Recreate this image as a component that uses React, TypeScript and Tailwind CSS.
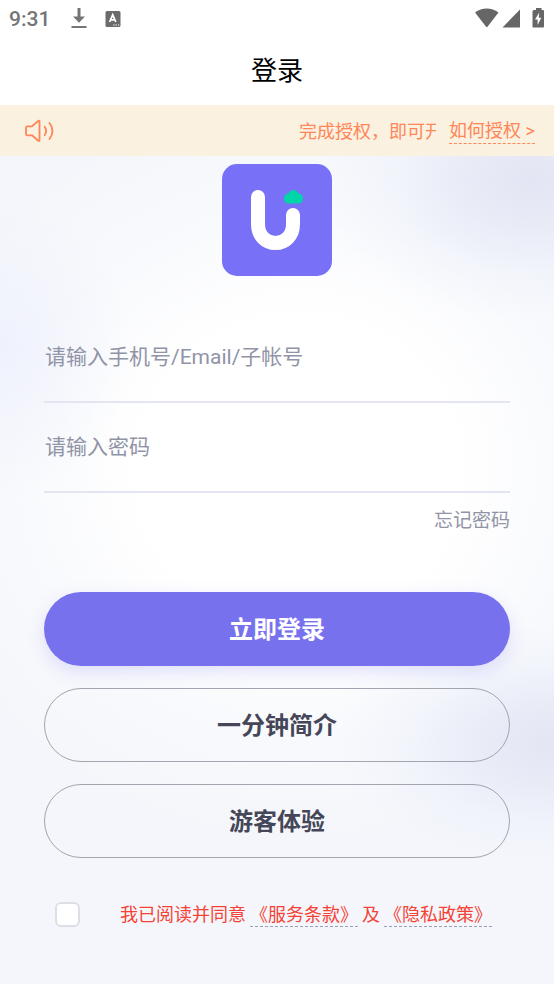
import React, { useState } from 'react';

const StatusBar: React.FC = () => (
  <div className="flex h-9 items-center justify-between pl-[9px] pr-[9px] text-[#666666]">
    <div className="flex items-center pt-px">
      <span className="text-[21px] leading-6 font-medium text-[#757575]">9:31</span>
      <svg className="ml-[21px] h-[22px] w-4" viewBox="0 0 16 22" fill="none" stroke="#757575" strokeWidth="2">
        <path d="M8 0v12" strokeWidth="3" />
        <path d="M2 8.500h12L8 14.800z" fill="#757575" stroke="none" />
        <path d="M0.500 19h15" />
      </svg>
      <svg className="ml-[18px] h-4 w-4" viewBox="0 0 16 16">
        <rect x="0.500" y="0" width="15" height="16" rx="1.600" fill="#6b6b6b" />
        <path d="M4.600 11L7.700 3.800L10.800 11M5.800 8.800h3.800" fill="none" stroke="#fff" strokeWidth="1.800" />
        <path d="M8.200 14h1.400M10.600 14h1.400M13 14h1.200" stroke="#fff" strokeWidth="1.200" />
      </svg>
    </div>
    <svg className="h-5 w-[70px]" viewBox="0 0 70 20" fill="#666666">
      <path d="M0 4.500C3.500 1.700 7.600 0.500 11.800 0.500s8.300 1.200 11.700 4L12.700 18.400a1.100 1.100 0 0 1-1.800 0z" />
      <path d="M45 1.500V19.500H27.500z" />
      <path d="M59 2H61V0H66.500V2H68Q69 2 69 3V18.500Q69 19.500 68 19.500H58.500Q57.500 19.500 57.500 18.500V3.500Q57.500 2 59 2z" />
      <path d="M64.300 4.500L60 11.600H62.600V17L66.300 9.800H63.700z" fill="#fff" />
    </svg>
  </div>
);

const Logo: React.FC = () => (
  <svg className="mx-auto mt-2 h-[112px] w-[110px]" viewBox="0 0 110 112">
    <rect width="110" height="112" rx="15" fill="#7870f7" />
    <path
      d="M36 33V60C36 72 44 79 53.500 79S71 72 71 60V51"
      fill="none"
      stroke="#fff"
      strokeWidth="14"
      strokeLinecap="round"
    />
    <path
      d="M67 39.500C64 39.500 62 37.500 62 34.500C62 31.500 64 29.500 66.500 29.500C67.500 27.300 69.300 26 71.500 26S75.500 27.300 76.500 29.500C79 29.500 81 31.500 81 34.500C81 37.500 79 39.500 76 39.500z"
      fill="#00d5aa"
    />
  </svg>
);

const Notice: React.FC = () => (
  <div className="flex h-[51px] items-center bg-[#fbf1e0] pl-6 pr-[19px] text-[18px] leading-6 text-[#ff8658]">
    <svg className="h-6 w-[31px] shrink-0" viewBox="0 0 31 24" fill="none" stroke="#ff8658" strokeWidth="1.800" strokeLinecap="round" strokeLinejoin="round">
      <path d="M3.200 7.300H8L14.300 1.900Q15.500 1.200 15.500 2.500V21.300Q15.500 22.600 14.300 21.800L8 16.300H3.200Q2 16.300 2 15.100V8.500Q2 7.300 3.200 7.300z" />
      <path d="M20.700 7.700Q23.500 12 20.700 16.300M25.500 4Q31.500 12 25.500 20" />
    </svg>
    <div className="ml-auto mr-[13px] w-[137px] overflow-hidden whitespace-nowrap pt-0.5">完成授权，即可开</div>
    <a href="#help" className="shrink-0 border-b border-dashed border-[#ff8658] pt-0.5">如何授权 &gt;</a>
  </div>
);

const inputClass =
  'block h-[90px] w-full border-b-2 border-[#e3e5f3] bg-transparent px-px text-[21px] text-[#454758] outline-none placeholder:text-[#9194a6] placeholder:opacity-100';
const outlineButton =
  'h-[74px] w-full rounded-full border border-[#a3a4b0] pt-0.5 text-[24px] font-bold text-[#454758]';

const App: React.FC = () => {
  const [account, setAccount] = useState('');
  const [password, setPassword] = useState('');
  const [agreed, setAgreed] = useState(false);

  return (
    <div className="flex min-h-screen flex-col bg-white font-[Roboto,'Noto_Sans_CJK_SC',sans-serif]">
      <StatusBar />
      <header className="flex h-[69px] items-center justify-center">
        <h1 className="text-[26px] leading-8 text-black">登录</h1>
      </header>
      <Notice />
      <main className="flex-1 bg-[#f4f6fb] bg-[radial-gradient(ellipse_210px_140px_at_96%_3%,#e3e5f4_0%,#e5e7f5bb_35%,#eaeefa66_65%,transparent_100%),radial-gradient(ellipse_220px_120px_at_100%_71%,#e3e5f4_0%,#e5e7f5bb_35%,#eaeefa66_65%,transparent_100%),radial-gradient(ellipse_130px_150px_at_0%_23%,#eff1fd_0%,#eff1fd66_50%,transparent_100%),radial-gradient(ellipse_400px_380px_at_54%_38%,#ffffff_0%,#ffffff_40%,#ffffff66_70%,transparent_100%)] px-11 pb-14">
        <Logo />
        <form className="mt-[37px]" onSubmit={e => e.preventDefault()}>
          <input
            className={inputClass}
            aria-label="请输入手机号/Email/子帐号"
            placeholder="请输入手机号/Email/子帐号"
            value={account}
            onChange={e => setAccount(e.target.value)}
          />
          <input
            className={inputClass}
            type="password"
            aria-label="请输入密码"
            placeholder="请输入密码"
            value={password}
            onChange={e => setPassword(e.target.value)}
          />
          <div className="mt-[14px] flex justify-end">
            <a href="#forgot" className="text-[19px] leading-7 text-[#9194a6]">忘记密码</a>
          </div>
          <div className="mt-[57px] flex flex-col gap-[22px]">
            <button type="submit" className="h-[74px] w-full rounded-full bg-[#7871ee] pt-0.5 text-[24px] font-bold text-white shadow-[0_6px_18px_#7871ee33]">
              立即登录
            </button>
            <button type="button" className={outlineButton}>一分钟简介</button>
            <button type="button" className={outlineButton}>游客体验</button>
          </div>
          <div className="mt-11 flex items-center pl-[11px]">
            <input
              id="agree"
              type="checkbox"
              className="h-[25px] w-[25px] shrink-0 appearance-none rounded-md border-2 border-[#dddfe6] bg-white checked:bg-[#7871ee]"
              checked={agreed}
              onChange={e => setAgreed(e.target.checked)}
            />
            <div className="ml-10 flex gap-1 whitespace-nowrap pt-0.5 text-[18px] leading-[22px] text-[#f44336]">
              <label htmlFor="agree">我已阅读并同意</label>
              <a href="#terms" className="border-b border-dashed border-[#9b9fb4]">《服务条款》</a>
              <span>及</span>
              <a href="#privacy" className="border-b border-dashed border-[#9b9fb4]">《隐私政策》</a>
            </div>
          </div>
        </form>
      </main>
    </div>
  );
};

export default App;
